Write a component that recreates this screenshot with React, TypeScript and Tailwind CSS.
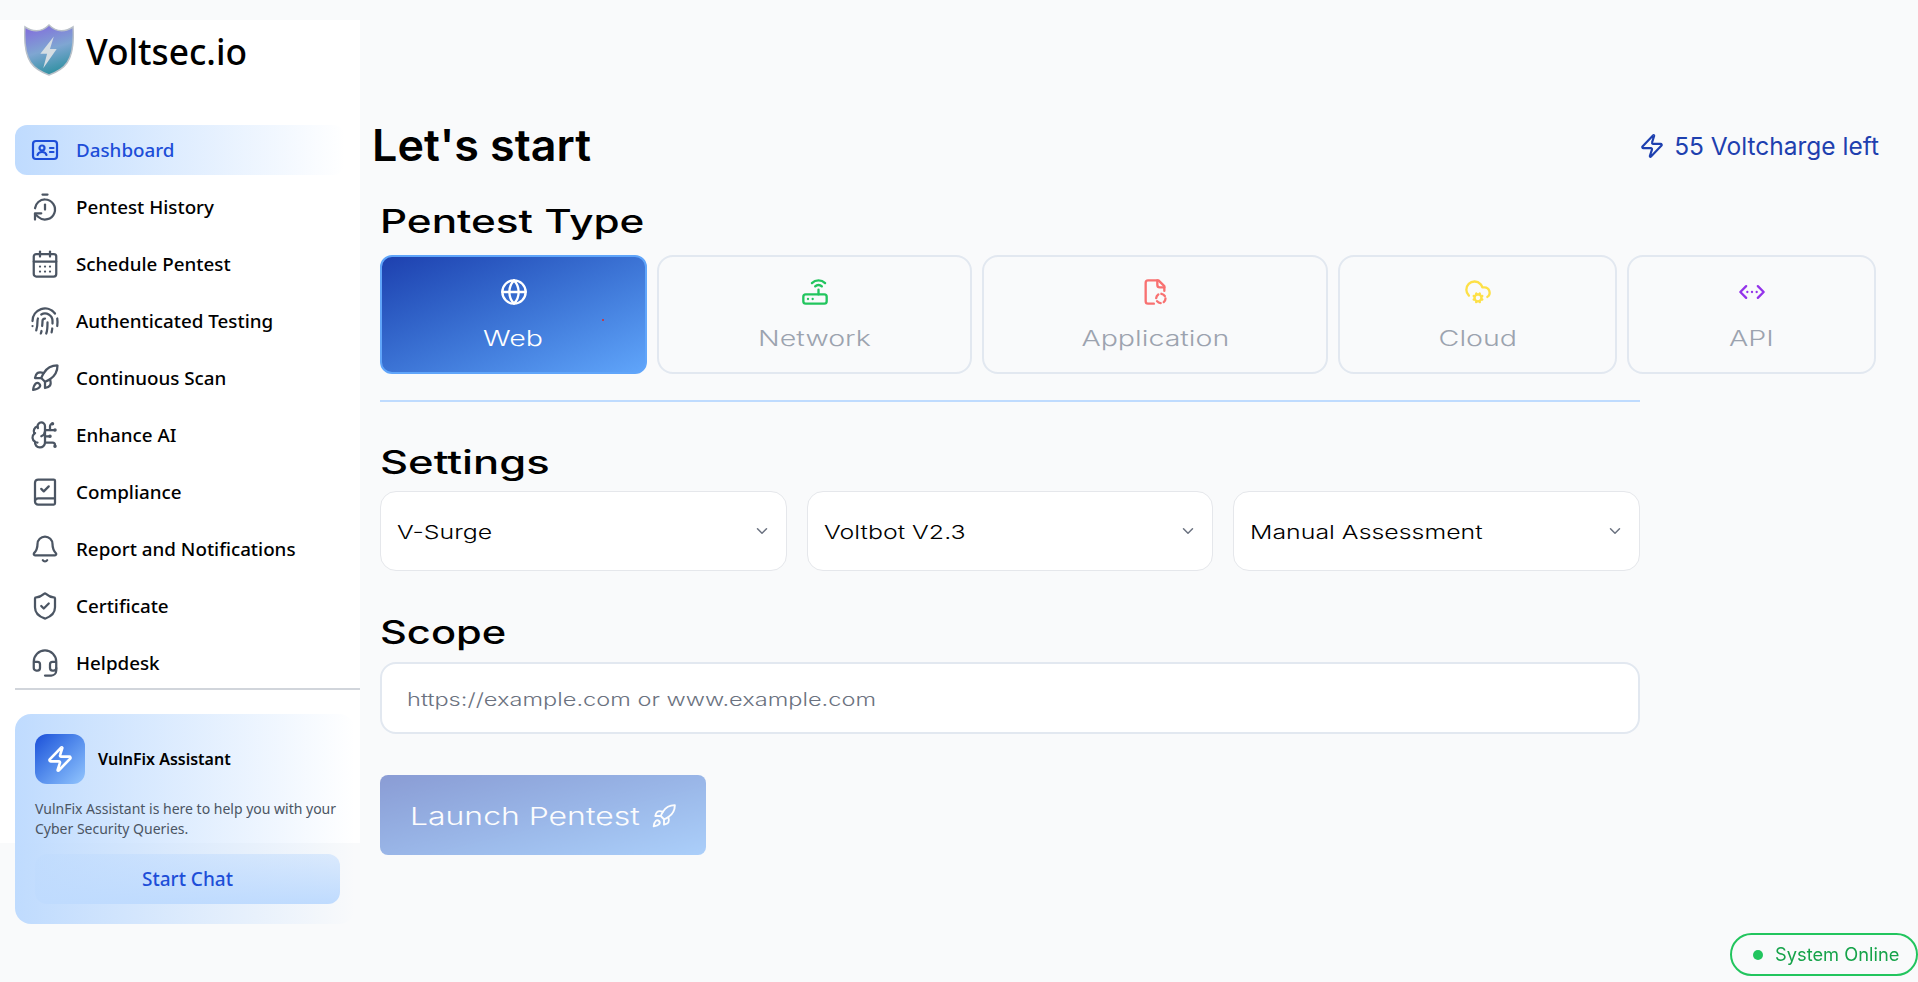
import {
  Bell,
  BookCheck,
  BrainCircuit,
  CalendarDays,
  ChevronDown,
  ChevronsLeftRightEllipsis,
  CloudCog,
  Fingerprint,
  Globe,
  Headset,
  Rocket,
  Router,
  ShieldCheck,
  TimerReset,
  Zap,
} from "lucide-react";

const navItems = [
  { label: "Pentest History", icon: TimerReset },
  { label: "Schedule Pentest", icon: CalendarDays },
  { label: "Authenticated Testing", icon: Fingerprint },
  { label: "Continuous Scan", icon: Rocket },
  { label: "Enhance AI", icon: BrainCircuit },
  { label: "Compliance", icon: BookCheck },
  { label: "Report and Notifications", icon: Bell },
  { label: "Certificate", icon: ShieldCheck },
  { label: "Helpdesk", icon: Headset },
];

// file with a dashed circle, lucide has only the gear version
function FileDashed({ className }: { className?: string }) {
  return (
    <svg viewBox="0 0 24 24" className={className} fill="none" stroke="currentColor" strokeWidth="2" strokeLinecap="round" strokeLinejoin="round">
      <path d="M11 22H6a2 2 0 0 1-2-2V4a2 2 0 0 1 2-2h9l5 5v4" />
      <path d="M14 2v4a2 2 0 0 0 2 2h4" />
      <circle cx="17" cy="17.500" r="4" strokeDasharray="3.500 2.800" />
    </svg>
  );
}

const pentestTypes = [
  { label: "Network", icon: Router, color: "text-[#22c55e]", width: "w-[315px]" },
  { label: "Application", icon: FileDashed, color: "text-[#f87171]", width: "w-[346px]" },
  { label: "Cloud", icon: CloudCog, color: "text-[#fde047]", width: "w-[279px]" },
  { label: "API", icon: ChevronsLeftRightEllipsis, color: "text-[#9333ea]", width: "w-[249px]" },
];

const settings = ["V-Surge", "Voltbot V2.3", "Manual Assessment"];

function ShieldLogo() {
  return (
    <svg viewBox="0 0 52 54" className="w-[50px] h-[52px] shrink-0">
      <defs>
        <linearGradient id="shieldFill" x1="0.3" y1="0" x2="0.6" y2="1">
          <stop offset="0" stopColor="#8270dc" />
          <stop offset="0.5" stopColor="#7fa6d2" />
          <stop offset="1" stopColor="#2b8f9f" />
        </linearGradient>
      </defs>
      <path
        d="M26 1c4 4 9 6 13 6 4 0 8-1 12-4 1 16 0 28-6 37-4 6-11 10-19 13C18 50 11 46 7 40 1 31 0 19 1 3c4 3 8 4 12 4 4 0 9-2 13-6z"
        fill="url(#shieldFill)"
        stroke="#b9c0c8"
        strokeWidth="1.5"
      />
      <path d="M31 13 17 31h7l-4 15 14-20h-7l4-13z" fill="#d5dde3" />
    </svg>
  );
}

function Sidebar() {
  return (
    <aside className="mt-5 w-[360px] h-[823px] shrink-0 bg-white">
      <div className="flex items-start gap-[12px] pl-[24px] pt-[4px] h-[105px]">
        <ShieldLogo />
        <span className="text-[35.300px] leading-[54px] font-medium text-black font-['Noto_Sans',sans-serif]">Voltsec.io</span>
      </div>
      <nav className="flex flex-col gap-[7px] ml-[15px] font-['Noto_Sans',sans-serif]">
        <a className="flex items-center gap-[17px] h-[50px] pl-[16px] rounded-xl bg-gradient-to-r from-[#bfdbfe] to-transparent w-[330px]">
          <svg viewBox="0 0 28 22" className="w-[28px] h-[22px] text-[#1d4ed8]" fill="none" stroke="currentColor" strokeWidth="2.200" strokeLinecap="round">
            <rect x="2" y="2" width="24" height="18" rx="3" />
            <circle cx="11" cy="9" r="2.500" />
            <path d="M6.500 16c.5-2 2.200-3 4.500-3s4 1 4.500 3M19 9h3.500M19 13h3.500" />
          </svg>
          <span className="text-[18.800px] font-medium text-[#1d4ed8]">Dashboard</span>
        </a>
        {navItems.map((item) => (
          <a key={item.label} className="flex items-center gap-[16px] h-[50px] pl-[15px]">
            <item.icon className="w-[30px] h-[30px] text-[#4b5563]" strokeWidth={1.8} />
            <span className="text-[18.800px] font-medium text-black">{item.label}</span>
          </a>
        ))}
      </nav>
      <div className="ml-[15px] h-[2px] bg-[#d1d5db]" />
      <div className="mt-[24px] ml-[15px] w-[340px] h-[210px] rounded-2xl bg-gradient-to-r from-[#bfdbfe] to-transparent pl-5 pr-[10px] pt-5 font-['Noto_Sans',sans-serif]">
        <div className="flex items-center gap-[13px]">
          <div className="flex items-center justify-center w-[50px] h-[50px] rounded-xl bg-gradient-to-br from-[#1d4ed8] to-[#93c5fd]">
            <Zap className="w-7 h-7 text-white" strokeWidth={2.25} />
          </div>
          <span className="text-[16px] font-semibold text-black">VulnFix Assistant</span>
        </div>
        <p className="mt-[15px] text-[14px] leading-[20px] text-[#4b5563]">
          VulnFix Assistant is here to help you with your Cyber Security Queries.
        </p>
        <button className="mt-[15px] w-[305px] h-[50px] rounded-xl bg-gradient-to-b from-[#bfdbfe]/50 to-[#bfdbfe] text-[19px] font-medium text-[#1d4ed8]">
          Start Chat
        </button>
      </div>
    </aside>
  );
}

function SectionTitle({ children, stretch }: { children: string; stretch: string }) {
  return (
    <h2 className={`h-9 text-[32px] leading-9 font-medium text-black font-['Inter',sans-serif] origin-left w-fit ${stretch}`}>
      {children}
    </h2>
  );
}

function PentestTypes() {
  return (
    <div className="flex gap-[10px] mt-[15px]">
      <button className="relative flex flex-col items-center w-[267px] h-[119px] pt-[21px] rounded-xl border-2 border-[#60a5fa] bg-gradient-to-br from-[#1e40af] to-[#60a5fa] text-white">
        <Globe className="w-[28px] h-[28px]" strokeWidth={2} />
        <span className="mt-[17px] text-[21px] leading-8 font-light font-['Inter',sans-serif] scale-x-[1.36]">Web</span>
        <span className="absolute left-[220px] top-[62px] w-[2px] h-[2px] rounded-full bg-[#dc2626]" />
      </button>
      {pentestTypes.map((type) => (
        <button key={type.label} className={`flex flex-col items-center ${type.width} h-[119px] pt-[21px] rounded-2xl border-2 border-[#e2e8f0]`}>
          <type.icon className={`w-[28px] h-[28px] ${type.color}`} strokeWidth={2} />
          <span className="mt-[17px] text-[21px] leading-8 font-light text-[#9ca3af] font-['Inter',sans-serif] scale-x-[1.36]">{type.label}</span>
        </button>
      ))}
    </div>
  );
}

export default function App() {
  return (
    <div className="flex min-h-[982px] bg-[#f9fafb]">
      <Sidebar />
      <main className="flex-1 pt-[120px] pl-[12px] pr-[39px]">
        <div className="flex items-center justify-between h-[50px]">
          <h1 className="text-[44px] leading-[50px] font-semibold text-black font-['Inter',sans-serif] origin-left scale-x-[1.02]">Let's start</h1>
          <div className="flex items-center gap-[9px] pt-[2px] text-[#1e40af] font-['Inter',sans-serif]">
            <Zap className="w-[26px] h-[26px]" strokeWidth={2} />
            <span className="text-[24.500px]">55 Voltcharge left</span>
          </div>
        </div>
        <section className="pl-[8px] mt-[34px]">
          <SectionTitle stretch="scale-x-[1.32]">Pentest Type</SectionTitle>
          <PentestTypes />
          <div className="mt-[26px] w-[1260px] h-[2px] bg-[#bfdbfe]" />
          <div className="mt-[43px]">
            <SectionTitle stretch="scale-x-[1.36]">Settings</SectionTitle>
          </div>
          <div className="grid grid-cols-3 gap-[20px] w-[1260px] mt-[10px]">
            {settings.map((value) => (
              <div key={value} className="flex items-center justify-between h-[80px] pl-[16px] pr-[15px] rounded-2xl border border-[#e5e7eb] bg-white">
                <span className="pt-[4px] text-[19px] text-black font-['Inter',sans-serif] font-light origin-left scale-x-[1.31]">{value}</span>
                <ChevronDown className="w-[18px] h-[18px] text-[#6b7280]" />
              </div>
            ))}
          </div>
          <div className="mt-[44px]">
            <SectionTitle stretch="scale-x-[1.3]">Scope</SectionTitle>
          </div>
          <div className="flex items-center w-[1260px] h-[72px] mt-[11px] pl-[25px] pt-[2px] rounded-2xl border-2 border-[#e2e8f0] bg-white">
            <input
              placeholder="https://example.com or www.example.com"
              className="w-[900px] origin-left scale-x-[1.31] bg-transparent text-[18px] font-light font-['Inter',sans-serif] placeholder:text-[#6b7280] outline-none"
            />
          </div>
          <button className="flex items-center mt-[41px] w-[326px] h-[80px] pl-[30px] rounded-lg bg-gradient-to-br from-[#1e40af] to-[#60a5fa] opacity-50 text-white">
            <span className="w-[241px] pt-[4px] text-left text-[24px] font-light font-['Inter',sans-serif] origin-left scale-x-[1.33]">Launch Pentest</span>
            <Rocket className="w-[26px] h-[26px] mt-[2px]" strokeWidth={1.75} />
          </button>
        </section>
      </main>
      <div className="fixed right-0 top-[933px] flex items-center gap-[12px] w-[188px] h-[43px] pl-[21px] rounded-full border-2 border-[#22c55e] text-[#16a34a] font-['Inter',sans-serif]">
        <span className="w-[10px] h-[10px] rounded-full bg-[#22c55e]" />
        <span className="text-[18.300px]">System Online</span>
      </div>
    </div>
  );
}
